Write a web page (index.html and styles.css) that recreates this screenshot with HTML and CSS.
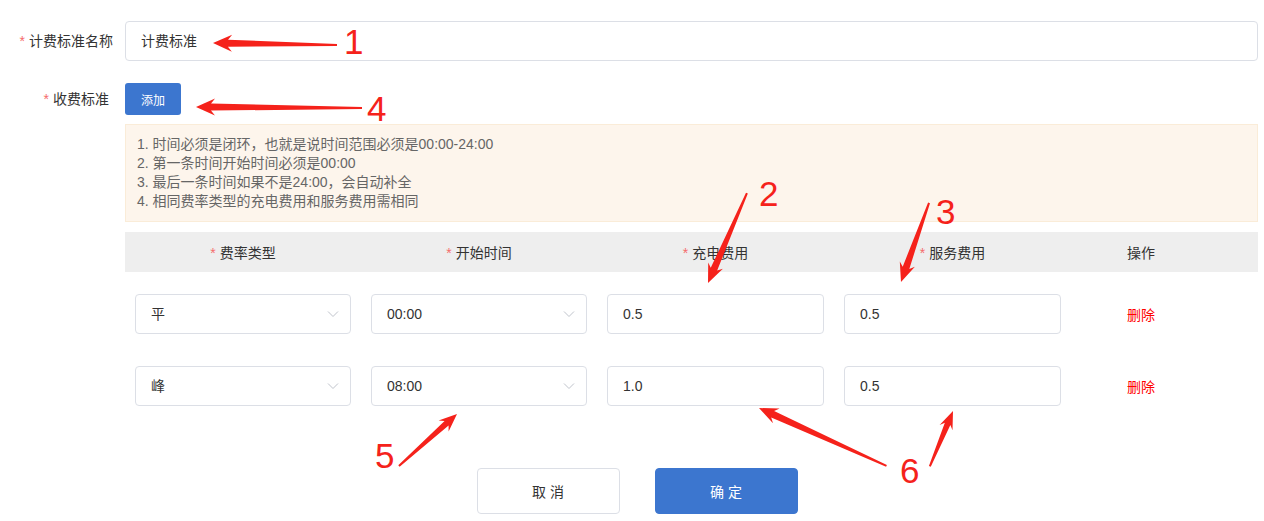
FILE: index.html
```html
<!DOCTYPE html>
<html lang="zh-CN">
<head>
    <meta charset="UTF-8">
    <meta name="viewport" content="width=device-width, initial-scale=1.0">
    <title>计费标准</title>
    <link rel="stylesheet" href="styles.css">
</head>
<body>
    <div class="form">
        <div class="form-item">
            <label class="form-label"><i class="req">*</i>计费标准名称</label>
            <div class="form-content">
                <div class="input">计费标准</div>
            </div>
        </div>

        <div class="form-item form-item-fee">
            <label class="form-label form-label-short"><i class="req">*</i>收费标准</label>
            <div class="form-content">
                <button type="button" class="btn-add">添加</button>

                <div class="notice">
                    <p>1. 时间必须是闭环，也就是说时间范围必须是00:00-24:00</p>
                    <p>2. 第一条时间开始时间必须是00:00</p>
                    <p>3. 最后一条时间如果不是24:00，会自动补全</p>
                    <p>4. 相同费率类型的充电费用和服务费用需相同</p>
                </div>

                <div class="fee-table">
                    <div class="fee-head">
                        <div class="cell"><i class="req">*</i>费率类型</div>
                        <div class="cell"><i class="req">*</i>开始时间</div>
                        <div class="cell"><i class="req">*</i>充电费用</div>
                        <div class="cell"><i class="req">*</i>服务费用</div>
                        <div class="cell">操作</div>
                    </div>
                    <div class="fee-body">
                        <div class="fee-row">
                            <div class="cell"><div class="select"><span>平</span><svg width="12" height="8" viewBox="0 0 12 8"><polyline points="1,1.5 6,6.5 11,1.5" fill="none" stroke="#c0c4cc" stroke-width="1"/></svg></div></div>
                            <div class="cell"><div class="select"><span>00:00</span><svg width="12" height="8" viewBox="0 0 12 8"><polyline points="1,1.5 6,6.5 11,1.5" fill="none" stroke="#c0c4cc" stroke-width="1"/></svg></div></div>
                            <div class="cell"><div class="input">0.5</div></div>
                            <div class="cell"><div class="input">0.5</div></div>
                            <div class="cell"><a class="link-del">删除</a></div>
                        </div>
                        <div class="fee-row">
                            <div class="cell"><div class="select"><span>峰</span><svg width="12" height="8" viewBox="0 0 12 8"><polyline points="1,1.5 6,6.5 11,1.5" fill="none" stroke="#c0c4cc" stroke-width="1"/></svg></div></div>
                            <div class="cell"><div class="select"><span>08:00</span><svg width="12" height="8" viewBox="0 0 12 8"><polyline points="1,1.5 6,6.5 11,1.5" fill="none" stroke="#c0c4cc" stroke-width="1"/></svg></div></div>
                            <div class="cell"><div class="input">1.0</div></div>
                            <div class="cell"><div class="input">0.5</div></div>
                            <div class="cell"><a class="link-del">删除</a></div>
                        </div>
                    </div>
                </div>
            </div>
        </div>

        <div class="footer">
            <button type="button" class="btn btn-cancel">取 消</button>
            <button type="button" class="btn btn-ok">确 定</button>
        </div>
    </div>

    <!-- 标注（箭头和编号） -->
    <svg class="annotations" width="1264" height="521" viewBox="0 0 1264 521">
        <g fill="#f5221b">
            <polygon transform="translate(213 43) rotate(0.9)" points="0,0 19,-8.5 15,-3.5 124,-1 124,1 15,3.5 19,8.5"/>
            <polygon transform="translate(196 107) rotate(0.35)" points="0,0 19,-8.5 15,-3.5 166,-1 166,1 15,3.5 19,8.5"/>
            <polygon transform="translate(708 283) rotate(-66.6)" points="0,0 19,-8 15,-3.5 98,-1 98,1 15,3.5 19,8"/>
            <polygon transform="translate(901 282) rotate(-70.5)" points="0,0 19,-8 15,-3.5 84,-1 84,1 15,3.5 19,8"/>
            <polygon transform="translate(457 414) rotate(138.1)" points="0,0 18,-7.5 14,-3 78,-1 78,1 14,3 18,7.5"/>
            <polygon transform="translate(759 408) rotate(24.4)" points="0,0 19,-8 15,-3.5 140,-1 140,1 15,3.5 19,8"/>
            <polygon transform="translate(953 411) rotate(112.7)" points="0,0 18,-7 14,-3 60,-1 60,1 14,3 18,7"/>
        </g>
        <g class="ann-num">
            <text x="344" y="54">1</text>
            <text x="367" y="121">4</text>
            <text x="759" y="206">2</text>
            <text x="936" y="224">3</text>
            <text x="375" y="468">5</text>
            <text x="900" y="483">6</text>
        </g>
    </svg>
</body>
</html>
```

FILE: styles.css
```css
body {
    margin: 0;
    font-family: "Liberation Sans", "Noto Sans CJK SC", sans-serif;
    font-size: 14px;
    color: #333;
    background-color: #fff;
}

.form {
    padding: 21px 6px 0 0;
}

.form-item {
    display: flex;
    align-items: flex-start;
}

.form-item-fee {
    margin-top: 22px;
}

.form-label {
    width: 125px;
    flex-shrink: 0;
    box-sizing: border-box;
    padding-right: 12px;
    text-align: right;
    line-height: 40px;
    color: #333;
}

.form-label-short {
    padding-right: 16px;
    line-height: 32px;
}

.req {
    font-style: normal;
    color: #f56c6c;
    margin-right: 4px;
}

.form-content {
    flex: 1;
    min-width: 0;
}

.input,
.select {
    height: 40px;
    box-sizing: border-box;
    border: 1px solid #dcdfe6;
    border-radius: 4px;
    padding: 0 15px;
    line-height: 38px;
    color: #333;
    background-color: #fff;
}

.select {
    display: flex;
    align-items: center;
    justify-content: space-between;
    padding-right: 11px;
}

.btn-add {
    display: block;
    width: 56px;
    height: 32px;
    border: none;
    border-radius: 3px;
    background-color: #3c76cf;
    color: #fff;
    font-family: inherit;
    font-size: 12px;
    padding: 0;
}

.notice {
    margin-top: 9px;
    padding: 10px 11px;
    background-color: #fdf5ec;
    border: 1px solid #faecd8;
    color: #666;
    line-height: 19px;
}

.notice p {
    margin: 0;
}

.fee-table {
    margin-top: 10px;
}

.fee-head,
.fee-row {
    display: grid;
    grid-template-columns: 236px 236px 237px 237px 140px 1fr;
}

.fee-head {
    height: 40px;
    background-color: #eeeeee;
    align-items: center;
}

.fee-head .cell {
    text-align: center;
}

.fee-body {
    padding-top: 22px;
    display: flex;
    flex-direction: column;
    gap: 32px;
}

.fee-row {
    align-items: center;
}

.fee-row .cell {
    padding: 0 10px;
}

.fee-row .cell:nth-child(5) {
    text-align: center;
    padding: 0 0 1px;
}

.link-del {
    color: #ff0000;
    cursor: pointer;
}

.footer {
    display: flex;
    justify-content: center;
    gap: 35px;
    margin-top: 62px;
    padding-left: 16px;
}

.btn {
    width: 143px;
    height: 46px;
    border-radius: 4px;
    font-family: inherit;
    font-size: 14px;
    padding: 0;
}

.btn-cancel {
    background-color: #fff;
    border: 1px solid #dcdfe6;
    color: #333;
}

.btn-ok {
    background-color: #3c76cf;
    border: 1px solid #3c76cf;
    color: #fff;
}

.annotations {
    position: absolute;
    top: 0;
    left: 0;
    pointer-events: none;
}

.ann-num text {
    font-family: "Liberation Sans", sans-serif;
    font-size: 35px;
    fill: #f5221b;
}
```
